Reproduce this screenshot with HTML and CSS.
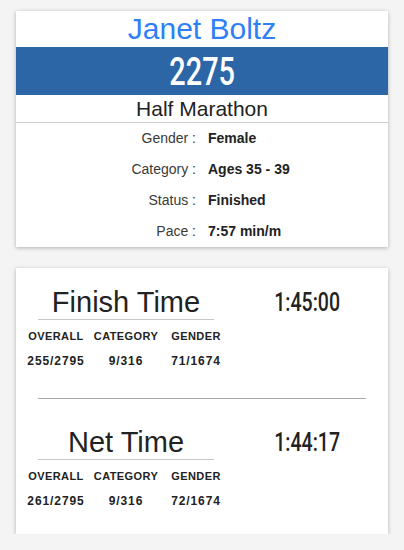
FILE: index.html
```html
<!DOCTYPE html>
<html>
<head>
<meta charset="utf-8">
<link rel="stylesheet" href="styles.css">
</head>
<body>
<div class="page">
  <section class="card runner">
    <div class="name">Janet Boltz</div>
    <div class="bib"><span class="cond">2275</span></div>
    <div class="race">Half Marathon</div>
    <div class="details">
      <div class="label">Gender :</div><div class="value">Female</div>
      <div class="label">Category :</div><div class="value">Ages 35 - 39</div>
      <div class="label">Status :</div><div class="value">Finished</div>
      <div class="label">Pace :</div><div class="value">7:57 min/m</div>
    </div>
  </section>

  <section class="card results">
    <div class="result">
      <div class="left">
        <div class="title">Finish Time</div>
        <div class="ranks heads"><span>OVERALL</span><span>CATEGORY</span><span>GENDER</span></div>
        <div class="ranks vals"><span>255/2795</span><span>9/316</span><span>71/1674</span></div>
      </div>
      <div class="time"><span class="cond">1:45:00</span></div>
    </div>
    <hr class="divider">
    <div class="result">
      <div class="left">
        <div class="title">Net Time</div>
        <div class="ranks heads"><span>OVERALL</span><span>CATEGORY</span><span>GENDER</span></div>
        <div class="ranks vals"><span>261/2795</span><span>9/316</span><span>72/1674</span></div>
      </div>
      <div class="time"><span class="cond">1:44:17</span></div>
    </div>
  </section>
</div>
</body>
</html>
```
FILE: styles.css
```css
* { box-sizing: border-box; }
html, body { margin: 0; padding: 0; }
body {
  background: #f4f4f4;
  font-family: "Liberation Sans", Arial, sans-serif;
  color: #222;
}
.page {
  padding: 11px 16px 0 16px;
  display: flex;
  flex-direction: column;
  gap: 21px;
}
.card {
  background: #fff;
  box-shadow: 0 1px 4px rgba(0,0,0,0.28);
}
.name {
  height: 36px;
  line-height: 36px;
  font-size: 30px;
  color: #2f80f4;
  text-align: center;
}
.bib {
  height: 48px;
  padding-top: 2px;
  line-height: 46px;
  background: #2c66a7;
  color: #fff;
  text-align: center;
  font-size: 38px;
}
.cond {
  display: inline-block;
  font-family: Roboto, "Liberation Sans", sans-serif;
  font-weight: 500;
  transform: scaleX(0.76);
}
.race {
  height: 28px;
  line-height: 27px;
  font-size: 21px;
  text-align: center;
  color: #222;
  border-bottom: 1px solid #d0d0d0;
}
.details {
  display: grid;
  grid-template-columns: 1fr 1fr;
  column-gap: 12px;
  grid-auto-rows: 31px;
  line-height: 31px;
  font-size: 14px;
}
.label { text-align: right; color: #3a3a3a; }
.value { font-weight: bold; color: #222; }

.results { padding: 17px 5px 25px 5px; }
.result { display: flex; align-items: flex-start; }
.left { width: 210px; }
.title {
  margin: 0 17px;
  height: 35px;
  line-height: 34px;
  font-size: 29px;
  text-align: center;
  color: #222;
  border-bottom: 1px solid #c8c8c8;
}
.ranks {
  display: grid;
  grid-template-columns: 70px 70px 70px;
  text-align: center;
  font-weight: bold;
  color: #222;
  line-height: 16px;
}
.heads { font-size: 11px; letter-spacing: 0.4px; margin-top: 8px; }
.vals { font-size: 12px; letter-spacing: 0.9px; margin-top: 9px; }
.time {
  flex: 1;
  text-align: center;
  line-height: 34px;
  font-size: 25px;
  color: #222;
}
.time .cond { transform: scaleX(0.78); }
.divider {
  border: 0;
  border-top: 1px solid #a8a8a8;
  margin: 29px 17px 26px 17px;
}
```
